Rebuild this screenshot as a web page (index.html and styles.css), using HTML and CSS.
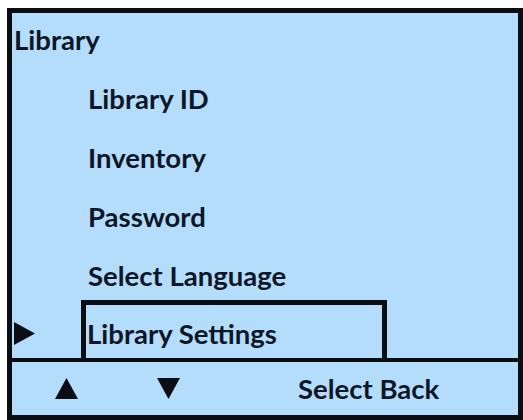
FILE: index.html
```html
<!DOCTYPE html>
<html lang="en">
<head>
<meta charset="utf-8">
<title>Library</title>
<link rel="stylesheet" href="styles.css">
</head>
<body>
<div class="screen">
  <div class="menu">
    <div class="title">Library</div>
    <ul class="items">
      <li class="item">Library ID</li>
      <li class="item">Inventory</li>
      <li class="item">Password</li>
      <li class="item">Select Language</li>
      <li class="item-selected">
        <span class="pointer">
          <svg width="21" height="23" viewBox="0 0 21 23"><polygon points="0,0 21,11.5 0,23" fill="#0b0f15"/></svg>
        </span>
        <span class="selbox">Library Settings</span>
      </li>
    </ul>
  </div>
  <div class="footer">
    <span class="key key-up">
      <svg width="23" height="21" viewBox="0 0 23 21"><polygon points="11.5,0 23,21 0,21" fill="#0b0f15"/></svg>
    </span>
    <span class="key key-down">
      <svg width="23" height="21" viewBox="0 0 23 21"><polygon points="0,0 23,0 11.5,21" fill="#0b0f15"/></svg>
    </span>
    <span class="softkeys">Select Back</span>
  </div>
</div>
</body>
</html>
```

FILE: styles.css
```css
html, body {
  margin: 0;
  padding: 0;
  background: #ffffff;
}

body {
  font-family: Lato, "Open Sans", sans-serif;
  font-weight: 700;
  font-size: 27.5px;
  color: #0d1626;
}

.screen {
  margin: 8px 0 0 7px;
  width: 516px;
  height: 412px;
  box-sizing: border-box;
  border: 5px solid #0a0d12;
  background: #b4dcfb;
  display: flex;
  flex-direction: column;
}

.menu {
  height: 345px;
  overflow: hidden;
}

.title {
  line-height: 53px;
  padding-left: 2px;
}

.items {
  list-style: none;
  margin: 0;
  padding: 3px 0 0;
}

.item {
  line-height: 59px;
  padding-left: 76px;
  white-space: nowrap;
}

.item-selected {
  display: flex;
  margin-top: -5px;
  height: 58px;
}

.pointer {
  width: 69px;
  padding-top: 22px;
  padding-left: 2px;
  box-sizing: border-box;
}

.pointer svg,
.key svg {
  display: block;
}

.selbox {
  width: 306px;
  height: 58px;
  box-sizing: border-box;
  border: 5px solid #0a0d12;
  border-bottom: none;
  padding: 14px 0 0 1px;
  line-height: 30px;
  white-space: nowrap;
}

.footer {
  flex: 1;
  border-top: 4px solid #0a0d12;
  display: flex;
  align-items: center;
  padding-left: 43px;
}

.key-up {
  margin-right: 79px;
}

.key-down {
  margin-right: 118px;
}

.softkeys {
  line-height: 30px;
  white-space: nowrap;
}
```
